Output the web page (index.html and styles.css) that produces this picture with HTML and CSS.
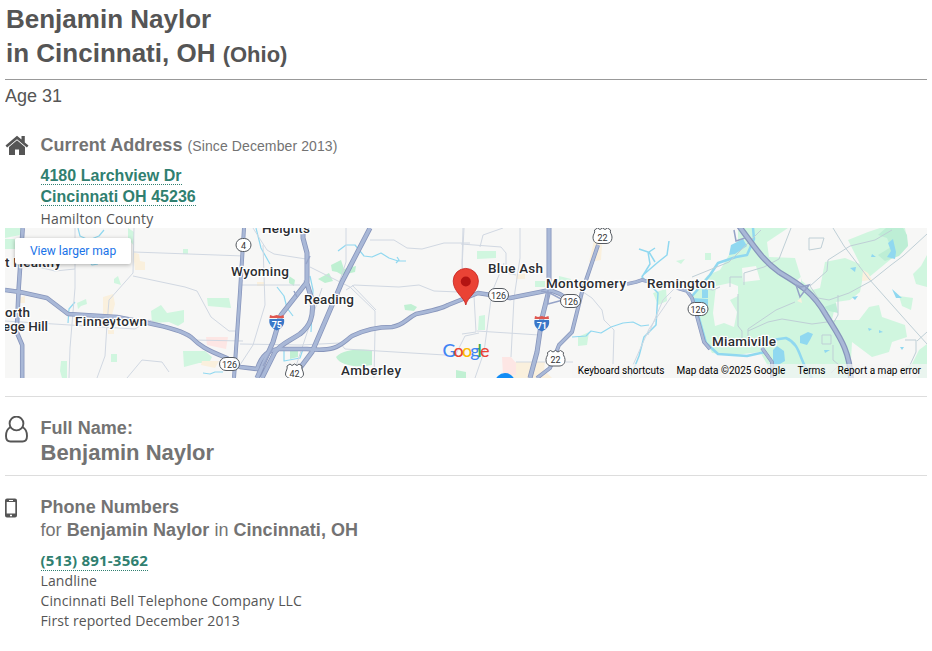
FILE: index.html
```html
<!DOCTYPE html>
<html lang="en">
<head>
  <meta charset="UTF-8">
  <meta name="viewport" content="width=device-width, initial-scale=1.0">
  <title>Benjamin Naylor in Cincinnati, OH</title>
  <link rel="stylesheet" href="styles.css">
</head>
<body>
  <header>
    <h1>Benjamin Naylor<br>in Cincinnati, OH <small>(Ohio)</small></h1>
    <p class="age">Age 31</p>
  </header>

  <section class="row address">
    <svg class="icon" width="24" height="21" viewBox="0 0 24 21">
      <path d="M12 .8 0.500 10.600l1.600 1.900L12 4.200l9.900 8.300 1.600-1.900-3.700-3.200V1h-3.300v3.600z" fill="#555"/>
      <path d="M12 5.300 4 12v8h6v-5.500h4V20h6v-8z" fill="#555"/>
    </svg>
    <div class="info">
      <h2>Current Address <small>(Since December 2013)</small></h2>
      <div class="street"><a href="#">4180 Larchview Dr<br>Cincinnati OH 45236</a></div>
      <div class="county">Hamilton County</div>
    </div>
  </section>

  <div class="map">
    <svg width="922" height="150" viewBox="5 228 922 150">
      <!-- parks -->
      <g fill="#d0f6df">
        <path d="M5 228h17l-2 7-15 3zM5 239h10v10H5zM77 303l9-4 1 5-6 2-3 3zM114 279l4-3 3 9-7-2zM61 361h6v17h-5l-2-7zM111 354h6v8h-6zM183 249h5v5h-5zM128 228l6 4v14l-6-8z"/>
        <path d="M207 298h22l2 10-23-2zM151 311l10-6 6 8 17-3v12l-6 4-9-4-17 1zM183 351h22l7 6-3 6h-10l-15 4z"/>
        <path d="M318 279l11-6 4 8-8 2zM331 265l10-5 3 9 12-3-1 6-13 3-5-3-5-1zM289 276l6 4-1 6-5-3z" fill="#bff0d2"/>
        <path d="M404 305l7-1 6 3-3 4-9-1zM336 357c7-8 25-8 36-7v15c-14 3-32 1-36-8zM290 349h8v8l-8 2zM456 370l10 2v6h-10z" fill="#c1f0d3"/>
        <path d="M477 251h19v7l-19 1zM479 316l6-1v15h-7zM559 276l12 3v8h-12zM535 281h10v6h-10zM578 337l11-5-2 13-9 1zM676 261l9-2-4 5zM653 293l13-4 1 12-9 4z"/>
        <!-- east side woods -->
        <path d="M705 253h6v7h-6zM738 228H788L767 242L769 257L795 258L802 281L812 290L820 288L825 262L845 258L865 266L860 292L850 300L836 302L832 320L859 320L869 307L879 305L882 317L905 325L907 337L892 342L889 352L872 357L852 342L850 378H775L760 352L735 355L712 353L700 330L692 298L699 285L708 275L720 270L738 240Z"/>
        <path d="M848 240L868 232L880 228H905L908 245L868 278L862 268ZM927 255v32l-11-3-3-10 8-8zM899 296l14 2-2 12-9-4zM912 364l7-14 8-6v34h-10l4-6-18-4z"/>
        <path d="M878 235l8-7h17l4 7 1 11-9 10-14 5-7-6 13-8-4-9zM824 307l12-4 2 10-9-2z" fill="#bdeed5"/>
      </g>
      <g fill="#f7f7f6">
        <path d="M742 268l14-2 4 14-17 2zM716 286l14-3 8 3v10l-8 4 7 12-3 15-10-4-9 3-2-13zM874 298l8-4 8 3-8 6zM800 286l-5-4 7-6z"/>
      </g>
      <g fill="#faf0dd">
        <path d="M103 297l10-3 2 10-3 11-9 1zM133 252l6 2 1 7 5 1v8h-10zM19 298l6-2v7h-6zM108 330h6v4h-6zM202 361h17l-4 7-14-3zM257 282h7v4h-7zM594 241l8 4-1 15-12 2zM863 270l5 3 4 7-10 1zM797 301l4-3 1 5zM516 274h9v5h-9z"/>
        <path d="M511 362h34l-1 8 8 8h-42z"/>
      </g>
      <path d="M206 337h22l-2 12-19-4zM502 357h9l5 6v12h-13z" fill="#fde6e4"/>

      <!-- rivers and lakes -->
      <g fill="none" stroke="#90d8f0" stroke-width="1.200" stroke-linejoin="round">
        <path d="M78 228l2 8 9 4 10-4 5-6M88 260l4 5 6-1M68 323l1-14 6-7M256 228l5 20 9 16M277 287l7 9 3 12 6 8M284 349v12l16-3 3-9M310 276l3 14-2 42M338 251l8-6h9l9 11 8 1 9-4 8 5 9 3h8M397 257l2 3-3 3M203 373l7 1 5-2h8"/>
        <path d="M572 337l14-1 5-5 10 2 10-6 12-4 10-1 8 4 8-1"/>
        <path d="M639 249l9 3 2 12-8 13 16 16-2 32-12 12-5 19-8 20M642 276l15-13 10-8 2-14M655 262l-6-10 6-4" stroke-width="1.500"/>
        <path d="M753 228l1 11-7 16-11 2-18 6-8 12-11 13-7 8M692 298l7 20 7 25 12 11 29 2 18-4M772 340l14-2c16 7 12 22 26 40" stroke-width="2.500"/>
      </g>
      <g fill="#90d8f0">
        <path d="M731 245l12-6 4 7-12 8-6 1zM702 287l6 3v8h-6zM692 298l16 1v9l-12 2zM773 350l4-4 7 5 1 10-12 7zM800 336l8-4 5 2-3 6-3 5-7-2zM888 243l5-4 3 13-1 7-8-2 4-6zM892 289l10 9-6 0zM850 268l6-1-1 5zM852 297l6-1-3 4zM868 328l4 1-3 2zM879 330l4 2-4 1zM824 350h6l-5 3zM872 254l4 3h-5zM900 347h4l-2 3z"/>
      </g>

      <!-- local streets -->
      <g fill="none" stroke="#d1d8e2" stroke-width="1">
        <path d="M75 228v60l-5 60-1 30M134 228l-1 45-24 27-2 24-2 32-8 22M134 252l110 4M133 276l52 11 12 4 14 26 18 14h10M5 321l130 8 14-9 17 6 27 14 50 1M127 378l15-18 20 2 7 10"/>
        <path d="M30 265l25 6 20-2M253 228l14 22 7 4 32 5M263 245l2 60-12 40-17 26M310 267l40 20 25 24v20l-1 47M240 285h60M346 228v34l-8 24M370 240h24l13 8 15 1 22-6h26M346 290l8-5 45 2 20-2 15 6 25 1M240 344l60 1 40-2 5 6 100 6M322 288l-30 90M352 285l24 25M463 228l-1 35 4 37M455 356l10-20 14-3"/>
        <path d="M464 228l-2 40M480 247l3-12 20-7M461 244l40 3 5 6v20l10 2M504 263l-12 29-8 60-9 26M520 228v30l-6 40-3 59M474 296l2 36-14 2M477 331l62 4M516 362h57M580 290l12 8 10 12 2 10 10 10-1 34M671 297l-22 32-16 36M683 280l-20 20-15 35"/>
      </g>
      <g fill="none" stroke="#bfcfd6" stroke-width="1">
        <path d="M692 277l37-15 32-32M744 285v-12l20-6 15-8 12-31M701 288l12 2 7-3M730 287v-10h12M810 286l17-15 1-11 22-14 25-6 17-10M833 228l11 18 25 33 40 45 18 20M810 286l8 12 11 2 20-7 22-12 20-16 12-9 24-22M838 295v20l-7 12M738 294v32l4 5v9M748 339v-10l28-19 19-8M748 331l20-9 14-3 30 5 15-2M822 335h9v9h-9zM833 345v15l6 5-8 8M905 340h11v12l-6 13M917 341l10-9M809 238h15l-3 10-12 2z"/>
      </g>

      <!-- highways: dark casing below, light fill on top -->
      <g fill="none" stroke="#8795bb" stroke-linejoin="round">
        <path d="M22.700 228l-4 60-2 44 5.500 13v33M5 290l15 2 27 6 21 16 49 3 31 6c20 4 35 8 43 14 8 8 15 13 36 21l13 9 17 2c5-15 12-19 22-20h28c30 3 33-4 45-13 12-6 23-9 40-9 12-2 14-8 24-13 15-3 25-5 32-9l30-12 32 5 40-8 10 4 12 8" stroke-width="4.500"/>
        <path d="M303 228v10l4 15v29l-26 33-8 27-16 36M306 280l6 20c2 17-2 26-12 34-14 9-19 10-25 18l-13 26M370 228l-28 54-30 70-12 16M549 228v62l-7 28-5 34-7 26" stroke-width="5"/>
        <path d="M244 228l-4 64-6 86M598 245l-16 47-10 40-13 13-9 23-13 10" stroke-width="4"/>
        <path d="M627 284l9-2 6-2 8 2M677 288l10 3 5 7 6 22 6 22 6 7M762 348l10 14v16" stroke-width="3.800"/>
        <path d="M739 226c19 26 25 35 40 46 20 12 34 20 47 43 12 20 24 34 25 65" stroke-width="5.800"/>
      </g>
      <g fill="none" stroke="#a9b8d7" stroke-linejoin="round">
        <path d="M22.700 228l-4 60-2 44 5.500 13v33M5 290l15 2 27 6 21 16 49 3 31 6c20 4 35 8 43 14 8 8 15 13 36 21l13 9 17 2c5-15 12-19 22-20h28c30 3 33-4 45-13 12-6 23-9 40-9 12-2 14-8 24-13 15-3 25-5 32-9l30-12 32 5 40-8 10 4 12 8" stroke-width="2.900"/>
        <path d="M303 228v10l4 15v29l-26 33-8 27-16 36M306 280l6 20c2 17-2 26-12 34-14 9-19 10-25 18l-13 26M370 228l-28 54-30 70-12 16M549 228v62l-7 28-5 34-7 26" stroke-width="3.400"/>
        <path d="M244 228l-4 64-6 86M598 245l-16 47-10 40-13 13-9 23-13 10M627 284l9-2 6-2 8 2M677 288l10 3 5 7 6 22 6 22 6 7M762 348l10 14v16" stroke-width="2.500"/>
        <path d="M739 226c19 26 25 35 40 46 20 12 34 20 47 43 12 20 24 34 25 65" stroke-width="3.400"/>
      </g>
      <g fill="none" stroke="#95a3c7" stroke-width="1.500">
        <path d="M541 291l9 2 13 7-15 4v-14M796 285l4 12 6-8 3-4-8 2zM734 230l2 11 9-3M310 256l-4 8M294 291l3 6M263 366l10-18"/>
      </g>

      <!-- route shields -->
      <g class="shield">
        <rect x="236" y="238.500" width="15" height="13" rx="6.500"/><text x="243.500" y="248.500">4</text>
        <rect x="219.500" y="357.500" width="20" height="13" rx="6.500"/><text x="229.500" y="367.500">126</text>
        <rect x="488.500" y="288.500" width="20" height="13" rx="6.500"/><text x="498.500" y="298.500">126</text>
        <rect x="560.500" y="294.500" width="20" height="13" rx="6.500"/><text x="570.500" y="304.500">126</text>
        <rect x="688" y="302.500" width="20" height="13" rx="6.500"/><text x="698" y="312.500">126</text>
        <path d="M287 366l3-2 2 1.500 2.500-1.500 2.500 1.500 2-1.500 3 2c-1 3 1.500 5 1.500 8 0 4-5 4-9 7-4-3-9-3-9-7 0-3 2.500-5 1.500-8z"/><text x="294.500" y="376.500">42</text>
        <path d="M594.500 230l3-2 2.500 1.500 2.500-1.500 2.500 1.500 2.500-1.500 3 2c-1 3 1.500 4 1.500 7 0 5-3 6.500-6 6.500h-7c-3 0-6-1.500-6-6.500 0-3 2.500-4 1.500-7z"/><text x="602.500" y="240.500">22</text>
        <path d="M547.500 352.500l3-2 2.500 1.500 2.500-1.500 2.500 1.500 2.500-1.500 3 2c-1 3 1.500 4 1.500 7 0 5-3 6.500-6 6.500h-7c-3 0-6-1.500-6-6.500 0-3 2.500-4 1.500-7z"/><text x="555.500" y="363">22</text>
      </g>
      <g class="interstate">
        <path d="M269.500 319h14.500c1 6-2 9-7.200 11.500-5.300-2.500-8.300-5.500-7.300-11.500z" fill="#3a77c8"/>
        <path d="M270 315l3 1 3.800-1 3.700 1 3-1 .5 3h-14.500z" fill="#df5750"/><text x="276.800" y="327.500">75</text>
        <path d="M534.500 320H549c1 6-2 9-7.200 11.500-5.300-2.500-8.300-5.500-7.300-11.500z" fill="#3a77c8"/>
        <path d="M535 316l3 1 3.800-1 3.700 1 3-1 .5 3h-14.500z" fill="#df5750"/><text x="541.800" y="328.500">71</text>
      </g>

      <!-- place names -->
      <g class="place">
        <text x="262" y="233" textLength="48">Heights</text>
        <text x="231" y="276" textLength="58">Wyoming</text>
        <text x="304" y="304" textLength="50">Reading</text>
        <text x="75" y="326" textLength="72">Finneytown</text>
        <text x="5" y="267" textLength="56">t Healthy</text>
        <text x="5" y="317" textLength="25">orth</text>
        <text x="3" y="331" textLength="45">ege Hill</text>
        <text x="341" y="375" textLength="60">Amberley</text>
        <text x="488" y="273" textLength="55">Blue Ash</text>
        <text x="546" y="288" textLength="80">Montgomery</text>
        <text x="647" y="288" textLength="68">Remington</text>
        <text x="712" y="346" textLength="64">Miamiville</text>
      </g>

      <circle cx="505" cy="383" r="10" fill="#128cf5"/>
      <!-- marker -->
      <path d="M465.800 305c-1.500-8-12.600-13-12.600-24a12.600 12.600 0 0 1 25.200 0c0 11-11 16-12.600 24z" fill="#ea4335" stroke="#c5221f" stroke-width=".8"/>
      <circle cx="465.800" cy="281.500" r="5" fill="#b31412"/>
      <text class="logo" x="442.500" y="356.500" textLength="47"><tspan fill="#4285f4">G</tspan><tspan fill="#ea4335">o</tspan><tspan fill="#fbbc04">o</tspan><tspan fill="#4285f4">g</tspan><tspan fill="#34a853">l</tspan><tspan fill="#ea4335">e</tspan></text>
    </svg>
    <a class="larger" href="#">View larger map</a>
    <div class="credits">
      <span>Keyboard shortcuts</span><span>Map data ©2025 Google</span><span>Terms</span><span>Report a map error</span>
    </div>
  </div>

  <section class="row name">
    <svg class="icon" width="24" height="28" viewBox="0 0 24 28" fill="none" stroke="#555" stroke-width="1.900">
      <circle cx="11.500" cy="7.500" r="6.900"/>
      <path d="M5.800 11C2.500 12.500 1 15.500 1 20 1 24 3 25.500 5.500 25.500h12c2.500 0 4.500-1.500 4.500-5.500 0-4.500-1.500-7.500-4.800-9"/>
    </svg>
    <div class="info">
      <h2>Full Name:</h2>
      <div class="full-name">Benjamin Naylor</div>
    </div>
  </section>

  <section class="row phones">
    <svg class="icon" width="12" height="20" viewBox="0 0 12 20">
      <path fill="#555" fill-rule="evenodd" d="M2 .5h8a2 2 0 0 1 2 2v15a2 2 0 0 1-2 2H2a2 2 0 0 1-2-2v-15a2 2 0 0 1 2-2zM1.700 4v11.500h8.600V4zM4 2v.9h4V2zM5 16.800v1.400h2v-1.400z"/>
    </svg>
    <div class="info">
      <h2>Phone Numbers<br><span>for</span> Benjamin Naylor <span>in</span> Cincinnati, OH</h2>
      <a class="phone" href="#">(513) 891-3562</a>
      <div class="line">Landline</div>
      <div class="line">Cincinnati Bell Telephone Company LLC</div>
      <div class="line">First reported December 2013</div>
    </div>
  </section>
</body>
</html>
```
FILE: styles.css
```css
* {
  box-sizing: border-box;
}

body {
  margin: 0 5px;
  background: #fff;
  color: #555;
  font-family: "Open Sans", sans-serif;
  font-size: 14px;
  line-height: 20px;
}

h1, h2, .age, .street, .full-name {
  font-family: Arial, "Liberation Sans", sans-serif;
}

h1 {
  margin: 0;
  padding: 2px 0 7px 1px;
  border-bottom: 1px solid #999;
  font-size: 26px;
  line-height: 34px;
}

h1 small {
  font-size: 22px;
}

.age {
  margin: 5px 0 27px;
  font-size: 18px;
  line-height: 22px;
}

.row {
  display: flex;
}

.icon {
  display: block;
}

.info {
  margin-left: auto;
  width: 886.5px;
}

h2 {
  margin: 0;
  color: #737373;
  font-size: 18px;
  line-height: 22px;
  letter-spacing: 0.04px;
}

h2 small {
  font-size: 14px;
  font-weight: normal;
  letter-spacing: 0.1px;
}

h2 span {
  font-weight: normal;
}

a {
  color: #307f70;
  font-weight: bold;
  text-decoration: none;
}

.address .icon {
  margin-top: 1px;
}

.street {
  margin: 8px 0 2px;
  font-size: 16px;
  line-height: 21px;
  letter-spacing: 0.03px;
}

.street a,
.phone {
  border-bottom: 1px dotted #307f70;
}

.county {
  height: 19px;
  letter-spacing: 0.18px;
}

.map {
  position: relative;
  height: 150px;
  background: #f7f7f6;
  overflow: hidden;
  font-family: Roboto, sans-serif;
}

.map svg {
  display: block;
}

.place text {
  font-size: 13.5px;
  font-weight: 500;
  fill: #2b2d31;
  stroke: #fff;
  stroke-width: 2.5px;
  stroke-linejoin: round;
  paint-order: stroke;
}

.shield rect,
.shield path {
  fill: #fff;
  stroke: #555a60;
}

.shield text {
  font-size: 9px;
  fill: #333;
  text-anchor: middle;
}

.interstate text {
  font-size: 9px;
  font-weight: 700;
  fill: #fff;
  text-anchor: middle;
}

.logo {
  font-family: Lato, sans-serif;
  font-size: 18px;
  font-weight: 500;
}

.larger {
  position: absolute;
  top: 10px;
  left: 10px;
  width: 116px;
  height: 26px;
  background: #fff;
  border-radius: 2px;
  box-shadow: 0 1px 4px rgba(0, 0, 0, 0.3);
  color: #1a73e8;
  font-size: 12px;
  font-weight: normal;
  line-height: 26px;
  text-align: center;
}

.credits {
  position: absolute;
  right: 0;
  bottom: 0;
  display: flex;
  gap: 12px;
  padding: 0 6px;
  background: rgba(245, 245, 245, 0.7);
  color: #000;
  font-size: 10px;
  line-height: 14px;
}

.name {
  margin-top: 18px;
  padding: 19px 0 10px;
  border-top: 1px solid #ddd;
  border-bottom: 1px solid #ddd;
}

.name h2 {
  line-height: 24px;
}

.full-name {
  color: #737373;
  font-size: 22px;
  font-weight: bold;
  line-height: 25px;
}

.phones {
  padding-top: 20px;
}

.phones .icon {
  margin-top: 2px;
}

.phones h2 {
  margin-bottom: 8px;
  line-height: 23px;
}

.phone {
  font-size: 15px;
  letter-spacing: 0.2px;
}

.line {
  letter-spacing: 0.1px;
}
```
